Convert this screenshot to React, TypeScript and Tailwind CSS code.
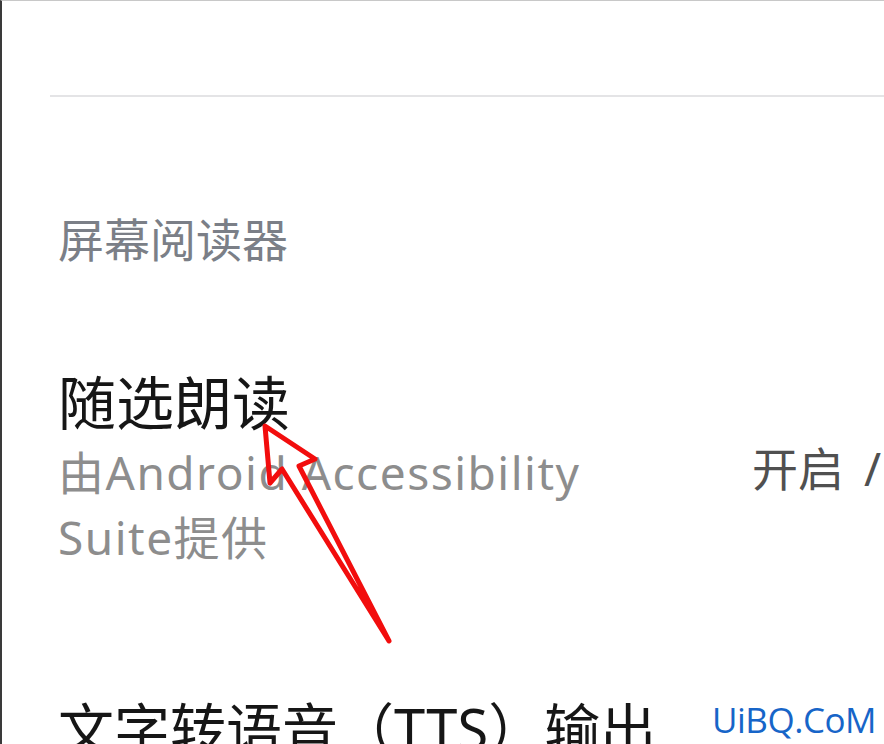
export default function App() {
  return (
    <div
      className="relative w-[884px] h-[744px] overflow-hidden bg-white border-t border-t-[#c8c8c8] border-l-2 border-l-[#3a3a3a]"
      style={{ fontFamily: '"Noto Sans", "Noto Sans CJK SC", sans-serif' }}
    >
      {/* header space + divider */}
      <div className="h-[94px]" />
      <div className="ml-[48px] h-[2px] bg-[#e4e4e6]" />

      <div className="pl-[56px]">
        <div className="mt-[112px] text-[46px] leading-[60px] text-[#7b7f87]">屏幕阅读器</div>

        <div className="flex items-center">
          <div className="w-[600px] shrink-0">
            <div className="mt-[99px] text-[58px] leading-[70px] text-[#161616]">随选朗读</div>
            <div className="mt-[2px] w-[560px] text-[46px] leading-[65px] tracking-[1.5px] text-[#8d8d8d]">
              由Android Accessibility Suite提供
            </div>
          </div>
          <div className="ml-[94px] mt-[96px] whitespace-nowrap text-[46px] leading-[60px] text-[#505050]">
            开启<span className="ml-[20px]">/</span>
          </div>
        </div>

        <div className="mt-[123px] whitespace-nowrap text-[56px] leading-[70px] text-[#161616]">
          文字转语音（TTS）输出
        </div>
      </div>

      {/* red annotation arrow */}
      <svg
        className="absolute left-0 top-0"
        width="884"
        height="744"
        viewBox="0 0 884 744"
        fill="none"
      >
        <polygon
          points="263,425 313,458 297,465 387,640 280,468 268,482"
          stroke="#f20d0d"
          strokeWidth="5"
          strokeLinejoin="round"
        />
      </svg>

      {/* watermark */}
      <div
        className="absolute left-[710px] top-[699px] text-[35px] leading-[40px] tracking-[-0.5px] text-[#1765c8]"
        style={{ fontFamily: '"Open Sans", sans-serif' }}
      >
        UiBQ.CoM
      </div>
    </div>
  );
}
